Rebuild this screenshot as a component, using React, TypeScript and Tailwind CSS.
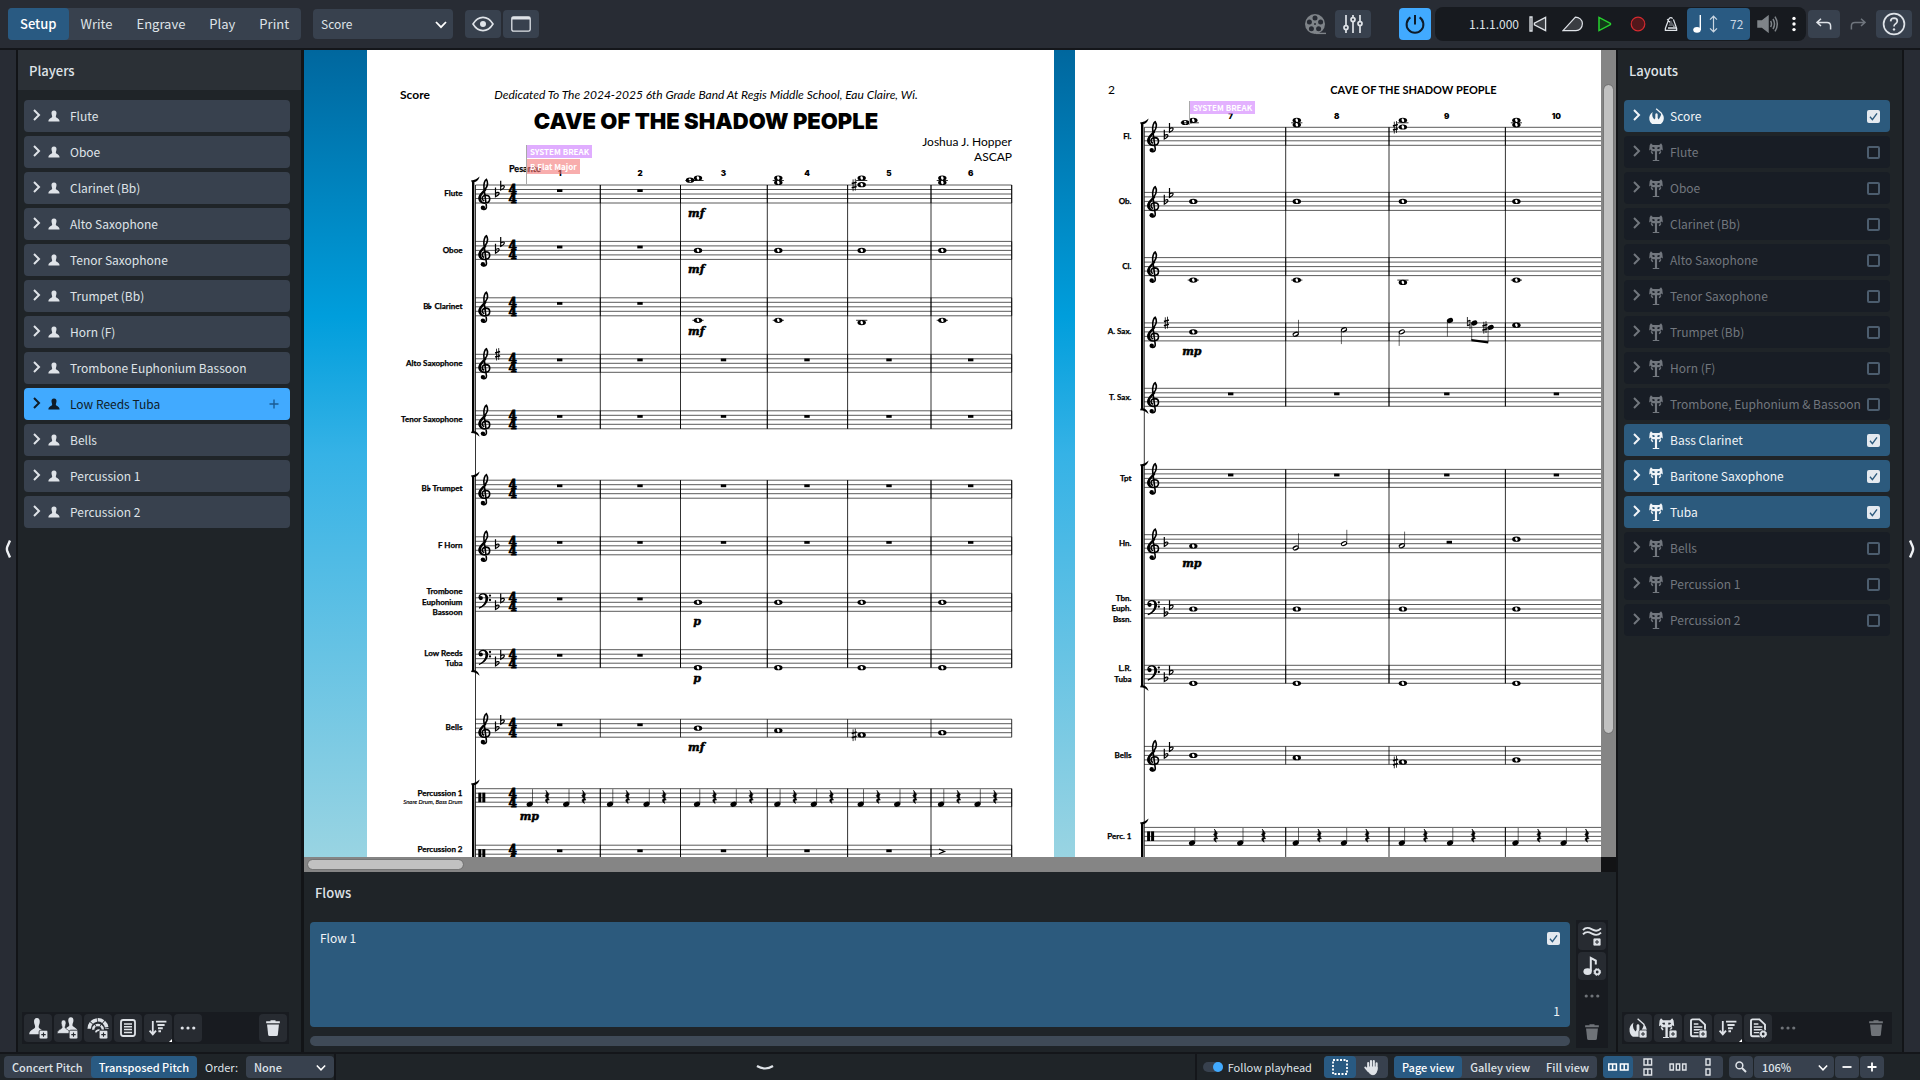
import React from "react";

type Mark = { x: number; y: number };

/* ---------- notation glyphs ---------- */

const LINE = 4.5;

function Staff({ x1, x2, y, bars }: { x1: number; x2: number; y: number; bars: number[] }) {
  return (
    <g stroke="#000" strokeWidth={0.65}>
      {[0, 1, 2, 3, 4].map((i) => (
        <line key={i} x1={x1} x2={x2} y1={y + i * LINE} y2={y + i * LINE} />
      ))}
      {bars.map((b) => (
        <line key={b} x1={b} x2={b} y1={y} y2={y + 18} strokeWidth={0.8} />
      ))}
    </g>
  );
}

function Treble({ x, y }: Mark) {
  return (
    <g transform={`translate(${x} ${y})`}>
      <path
        d="M4.7 24.3C7 25 8.6 23.6 8.2 21.2L5.8 3.5C5.2-1 6.6-4.8 8.2-5.6C9.9-3 9.3 1 7.2 4C5 7 .9 9.2 .9 13.3C.9 16.5 3.5 18.2 6.3 18.1C9.5 18 11.5 16.3 11.5 13.9C11.5 11.7 9.9 10.3 7.6 10.3C5.4 10.3 4 11.8 4 13.3C4 14.6 4.8 15.6 6 16"
        fill="none"
        stroke="#000"
        strokeWidth={1.6}
      />
      <path d="M.4 13.5C.6 9 5 7 7.6 3.2L8.2 5C6.2 8 3 9.6 2.9 13.2C2.9 15.4 4.2 17 6 17.6C2.6 17.8 .4 16 .4 13.5Z" />
      <circle cx={4.7} cy={22.8} r={2.2} />
    </g>
  );
}

function Bass({ x, y }: Mark) {
  return (
    <g transform={`translate(${x} ${y})`}>
      <path d="M.8 4.6C.8 1.8 2.8.5 5 .6C8 .8 9.2 2.8 9 5.6C8.7 10 5 13 .8 14.8" fill="none" stroke="#000" strokeWidth={1.2} />
      <path d="M5 .1C8.6.2 10.2 2.6 10 5.6C9.6 10 5 13.2 .6 15.2C4.6 12.4 7.2 9.4 7.2 5.4C7.2 3 6.8 1.2 5 .1Z" />
      <circle cx={2.6} cy={4.8} r={2.1} />
      <circle cx={11.8} cy={2.3} r={1.15} />
      <circle cx={11.8} cy={6.7} r={1.15} />
    </g>
  );
}

function PercClef({ x, y }: Mark) {
  return (
    <g>
      <rect x={x} y={y + 4} width={3} height={9.6} />
      <rect x={x + 4} y={y + 4} width={3} height={9.6} />
    </g>
  );
}

function Flat({ x, y }: Mark) {
  return (
    <path
      transform={`translate(${x} ${y})`}
      d="M.2-6.6V2.7C2.4 1.6 4 .3 3.8-1C3.5-2.1 1.4-1.8.2-.5"
      fill="none"
      stroke="#000"
      strokeWidth={1.2}
    />
  );
}

function Sharp({ x, y }: Mark) {
  return (
    <g transform={`translate(${x} ${y})`} stroke="#000">
      <path d="M-1-5.6V6.2M1.2-6.2V5.6" strokeWidth={0.8} />
      <path d="M-2.4-1.4L2.6-2.8M-2.4 2.8L2.6 1.4" strokeWidth={1.6} />
    </g>
  );
}

function Natural({ x, y }: Mark) {
  return (
    <g transform={`translate(${x} ${y})`} stroke="#000">
      <path d="M-1.2-6V3M1.4-3V6" strokeWidth={0.8} />
      <path d="M-1.4-1.6L1.6-2.6M-1.4 2.6L1.6 1.6" strokeWidth={1.4} />
    </g>
  );
}

function Whole({ x, y }: Mark) {
  return (
    <g transform={`translate(${x} ${y})`}>
      <ellipse rx={4.2} ry={2.6} />
      <ellipse rx={1.2} ry={1.8} fill="#fff" transform="rotate(-20)" />
    </g>
  );
}

function Note({ x, y, stem, hollow }: Mark & { stem: number; hollow?: boolean }) {
  const sx = stem < 0 ? x + 2.8 : x - 2.6;
  return (
    <g>
      <ellipse cx={x} cy={y} rx={3.2} ry={2.4} transform={`rotate(-24 ${x} ${y})`} />
      {hollow && <ellipse cx={x} cy={y} rx={2.4} ry={1} fill="#fff" transform={`rotate(-30 ${x} ${y})`} />}
      <line x1={sx} x2={sx} y1={y} y2={y + stem} stroke="#000" strokeWidth={0.6} />
    </g>
  );
}

function QuarterRest({ x, y }: Mark) {
  return (
    <path
      transform={`translate(${x} ${y + 8.4})`}
      d="M-1.2-6.8L1.9-2.6C.6-.9.8 1 2.2 3C.2 2.4-.4 4 .8 6.4C-2.4 4.6-2.2 1.7.2 1.6L-1.9-1.4C-.2-3-.2-4.6-1.2-6.8Z"
      stroke="#000"
      strokeWidth={0.6}
    />
  );
}

const BarRest = ({ x, y }: Mark) => <rect x={x - 2.7} y={y + 4.2} width={5.4} height={2.8} />;

const Ledger = ({ x, y }: Mark) => <line x1={x - 5.6} x2={x + 5.6} y1={y} y2={y} stroke="#000" strokeWidth={0.8} />;

function Bracket({ x, y1, y2, open }: { x: number; y1: number; y2: number; open?: boolean }) {
  return (
    <g>
      <rect x={x} y={y1} width={2.4} height={y2 - y1} />
      <path d={`M${x - 1} ${y1 - 0.6}C${x + 3} ${y1 - 0.8} ${x + 5} ${y1 - 2} ${x + 7.6} ${y1 - 4.4}C${x + 6.4} ${y1} ${x + 4} ${y1 + 1.4} ${x} ${y1 + 1.6}Z`} />
      {!open && (
        <path d={`M${x - 1} ${y2 + 0.6}C${x + 3} ${y2 + 0.8} ${x + 5} ${y2 + 2} ${x + 7.6} ${y2 + 4.4}C${x + 6.4} ${y2} ${x + 4} ${y2 - 1.4} ${x} ${y2 - 1.6}Z`} />
      )}
    </g>
  );
}

function Dynamic({ x, y, children }: Mark & { children: string }) {
  return (
    <text x={x} y={y} textAnchor="middle" fontFamily="'DejaVu Serif', serif" fontStyle="italic" fontWeight={700} fontSize={11} stroke="#000" strokeWidth={0.5}>
      {children}
    </text>
  );
}

function TimeSig({ x, y }: Mark) {
  return (
    <g fontFamily="'DejaVu Serif', serif" fontWeight={700} fontSize={12} textAnchor="middle" stroke="#000" strokeWidth={0.8}>
      <text x={x} y={y + 9}>4</text>
      <text x={x} y={y + 18}>4</text>
    </g>
  );
}

function Label({ x, y, lines, sub }: Mark & { lines: string[]; sub?: string }) {
  const start = y + (sub ? 7 : 11.2) - ((lines.length - 1) * 10.6) / 2;
  return (
    <g textAnchor="end" fontFamily="Lato, sans-serif" fontWeight={700} fontSize={8}>
      {lines.map((l, i) => (
        <text key={l} x={x} y={start + i * 10.6} stroke="#000" strokeWidth={0.25}>{l}</text>
      ))}
      {sub && <text x={x} y={start + 8.6} fontSize={6} fontWeight={400} fontStyle="italic" stroke="#000" strokeWidth={0.15}>{sub}</text>}
    </g>
  );
}

type Part = {
  y: number;
  name: string[];
  sub?: string;
  clef: "treble" | "bass" | "perc";
  key: number;
  notes?: (number | null)[];
  dyn?: { at: number; dy: number; text: string };
};

function PartHead({ p, x, labelX, time }: { p: Part; x: number; labelX: number; time?: boolean }) {
  const base = p.clef === "bass" ? 4.5 : 0;
  return (
    <g>
      <Label x={labelX} y={p.y} lines={p.name} sub={p.sub} />
      {p.clef === "treble" && <Treble x={x + 2.7} y={p.y} />}
      {p.clef === "bass" && <Bass x={x + 2.7} y={p.y} />}
      {p.clef === "perc" && <PercClef x={x + 2.8} y={p.y} />}
      {p.key < 0 && <Flat x={x + 19.8} y={p.y + 9 + base} />}
      {p.key < -1 && <Flat x={x + 25} y={p.y + 2.3 + base} />}
      {p.key > 0 && <Sharp x={x + 22} y={p.y} />}
      {time && <TimeSig x={x + 37.3} y={p.y} />}
    </g>
  );
}

/* High chord written above the flute staff: seconds in the first bar, thirds after it. */
function FluteChords({ xs, y }: { xs: number[]; y: number }) {
  return (
    <g>
      <Whole x={xs[0] - 8} y={y - 4.8} />
      <Whole x={xs[0]} y={y - 7} />
      <Ledger x={xs[0]} y={y - 4.5} />
      <Ledger x={xs[0] - 7} y={y - 4.5} />
      {[1, 3].map((i) => (
        <g key={i}>
          <Ledger x={xs[i]} y={y - 4.5} />
          <Whole x={xs[i]} y={y - 7} />
          <Whole x={xs[i]} y={y - 2.5} />
        </g>
      ))}
      <Ledger x={xs[2]} y={y - 4.5} />
      <Whole x={xs[2]} y={y - 7} />
      <Whole x={xs[2]} y={y - 0.3} />
      <Sharp x={xs[2] - 7.6} y={y} />
    </g>
  );
}

function WholeNotes({ p, xs }: { p: Part; xs: number[] }) {
  return (
    <g>
      {p.notes?.map((n, i) =>
        n === null ? null : (
          <g key={i}>
            {n > 20 && <Ledger x={xs[i]} y={p.y + 22.5} />}
            {p.name[0] === "Bells" && i === 2 && <Sharp x={xs[i] - 7.6} y={p.y + n} />}
            <Whole x={xs[i]} y={p.y + n} />
          </g>
        ),
      )}
      {p.dyn && <Dynamic x={p.dyn.at} y={p.y + p.dyn.dy}>{p.dyn.text}</Dynamic>}
    </g>
  );
}

function BarNumbers({ centres, first, y }: { centres: number[]; first: number; y: number }) {
  return (
    <g fontFamily="Inter, sans-serif" fontWeight={900} fontSize={8} textAnchor="middle">
      {centres.map((c, i) => (
        <text key={c} x={c} y={y}>{i + first}</text>
      ))}
    </g>
  );
}

function PageOneMusic() {
  const L = 475.5;
  const R = 1011.7;
  const bars = [600.3, 680.5, 767.3, 847.6, 931, R];
  const centres = [559.7, 640, 723.5, 807, 889, 970.7];
  const wx = [698, 778.3, 861.7, 942.3];
  const parts: Part[] = [
    { y: 185, name: ["Flute"], clef: "treble", key: -2, dyn: { at: 696.3, dy: 32, text: "mf" } },
    { y: 241.4, name: ["Oboe"], clef: "treble", key: -2, notes: [9, 9, 9, 9], dyn: { at: 696.3, dy: 32, text: "mf" } },
    { y: 297.8, name: ["B♭ Clarinet"], clef: "treble", key: 0, notes: [22.5, 22.5, 24.8, 22.5], dyn: { at: 696.3, dy: 37, text: "mf" } },
    { y: 354.3, name: ["Alto Saxophone"], clef: "treble", key: 1 },
    { y: 410.8, name: ["Tenor Saxophone"], clef: "treble", key: 0 },
    { y: 480.2, name: ["B♭ Trumpet"], clef: "treble", key: 0 },
    { y: 536.8, name: ["F Horn"], clef: "treble", key: -1 },
    { y: 593.3, name: ["Trombone", "Euphonium", "Bassoon"], clef: "bass", key: -2, notes: [9, 9, 9, 9], dyn: { at: 697, dy: 32, text: "p" } },
    { y: 649.7, name: ["Low Reeds", "Tuba"], clef: "bass", key: -2, notes: [18, 18, 18, 18], dyn: { at: 697, dy: 32, text: "p" } },
    { y: 719.2, name: ["Bells"], clef: "treble", key: -2, notes: [9, 11.3, 15.7, 13.5], dyn: { at: 696.3, dy: 32, text: "mf" } },
    { y: 788.7, name: ["Percussion 1"], sub: "Snare Drum, Bass Drum", clef: "perc", key: 0 },
    { y: 845.2, name: ["Percussion 2"], sub: "Crash Cymbals, Gong", clef: "perc", key: 0 },
  ];
  const perc = [529.7, 610, 697, 777.3, 860.7, 941];
  return (
    <svg viewBox="367 165 687 760" className="block h-[760px] w-full overflow-visible">
      <text x={509} y={172} fontFamily="Lato, sans-serif" fontWeight={700} fontSize={9} stroke="#000" strokeWidth={0.25}>Pesante</text>
      <BarNumbers centres={centres} first={1} y={176} />
      <line x1={L} x2={L} y1={185} y2={925} stroke="#000" strokeWidth={0.8} />
      {parts.map((p, i) => (
        <g key={p.y}>
          <Staff x1={L} x2={R} y={p.y} bars={bars} />
          <PartHead p={p} x={L} labelX={462.5} time />
          {i !== 10 && centres.slice(0, p.notes || i === 0 ? 2 : i === 11 ? 5 : 6).map((c) => <BarRest key={c} x={c} y={p.y} />)}
          <WholeNotes p={p} xs={wx} />
        </g>
      ))}
      <g stroke="#000" strokeWidth={0.8}>
        {bars.map((b) => (
          <path key={b} d={`M${b} 185V428.8M${b} 480.2V667.7M${b} 788.7V925`} />
        ))}
      </g>
      <FluteChords xs={wx} y={185} />
      <Bracket x={472} y1={181} y2={432.4} />
      <Bracket x={472} y1={476} y2={671.4} />
      <Bracket x={472} y1={784} y2={925} open />
      {perc.map((x) => (
        <g key={x}>
          <Note x={x} y={804.2} stem={-15} />
          <QuarterRest x={x + 17.4} y={788.7} />
          <Note x={x + 36.5} y={804.2} stem={-15} />
          <QuarterRest x={x + 54} y={788.7} />
        </g>
      ))}
      <Dynamic x={529.3} y={820}>mp</Dynamic>
      <path d="M939 849L944.6 851.4L939 853.8" fill="none" stroke="#000" strokeWidth={1.2} />
    </svg>
  );
}

function PageTwoMusic() {
  const L = 1144.3;
  const R = 1762;
  const bars = [1285.7, 1389, 1505.4, R];
  const centres = [1230.7, 1336.8, 1446.8, 1556.4];
  const wx = [1193.3, 1296.8, 1402.9, 1516.4];
  const parts: Part[] = [
    { y: 127.3, name: ["Fl."], clef: "treble", key: -2 },
    { y: 192.4, name: ["Ob."], clef: "treble", key: -2, notes: [9, 9, 9, 9] },
    { y: 257.6, name: ["Cl."], clef: "treble", key: 0, notes: [22.5, 22.5, 24.8, 22.5] },
    { y: 322.9, name: ["A. Sax."], clef: "treble", key: 1, notes: [9, null, null, 2.3], dyn: { at: 1191.8, dy: 32, text: "mp" } },
    { y: 388.3, name: ["T. Sax."], clef: "treble", key: 0 },
    { y: 469.4, name: ["Tpt"], clef: "treble", key: 0 },
    { y: 534.7, name: ["Hn."], clef: "treble", key: -1, notes: [11.3, null, null, 4.5], dyn: { at: 1191.8, dy: 32, text: "mp" } },
    { y: 600, name: ["Tbn.", "Euph.", "Bssn."], clef: "bass", key: -2, notes: [9, 9, 9, 9] },
    { y: 665.3, name: ["L.R.", "Tuba"], clef: "bass", key: -2, notes: [18, 18, 18, 18] },
    { y: 746.4, name: ["Bells"], clef: "treble", key: -2, notes: [9, 11.3, 15.7, 13.5] },
    { y: 827.4, name: ["Perc. 1"], clef: "perc", key: 0 },
  ];
  const perc = [1192, 1295.7, 1401.8, 1515.4];
  return (
    <svg viewBox="1075 105 687 820" className="block h-[820px] w-full overflow-visible">
      <BarNumbers centres={centres} first={7} y={119} />
      <line x1={L} x2={L} y1={127.3} y2={925} stroke="#000" strokeWidth={0.8} />
      {parts.map((p, i) => (
        <g key={p.y}>
          <Staff x1={L} x2={R} y={p.y} bars={bars} />
          <PartHead p={p} x={L} labelX={1131.5} />
          {(i === 4 || i === 5) && centres.map((c) => <BarRest key={c} x={c} y={p.y} />)}
          <WholeNotes p={p} xs={wx} />
        </g>
      ))}
      <g stroke="#000" strokeWidth={0.8}>
        {bars.map((b) => (
          <path key={b} d={`M${b} 127.3V406.3M${b} 469.4V683.3M${b} 827.4V925`} />
        ))}
      </g>
      <FluteChords xs={wx} y={127.3} />
      <Bracket x={1141} y1={123} y2={409.6} />
      <Bracket x={1141} y1={465} y2={686.6} />
      <Bracket x={1141} y1={823} y2={925} open />
      <Note x={1295.7} y={334.2} stem={-14.4} hollow />
      <Note x={1344} y={329.7} stem={14.4} hollow />
      <Note x={1401.8} y={331.9} stem={14} hollow />
      <Note x={1450} y={320.5} stem={16} />
      <Natural x={1468.6} y={323} />
      <Note x={1474.3} y={323} stem={17} />
      <Sharp x={1484.8} y={327.4} />
      <Note x={1490.7} y={327.4} stem={15} />
      <path d="M1471.4 339L1488.2 341.2V343.4L1471.4 341.2Z" />
      <Note x={1295.7} y={548} stem={-14.6} hollow />
      <Note x={1344} y={543.6} stem={-13.8} hollow />
      <Note x={1401.8} y={545.8} stem={-14.2} hollow />
      <rect x={1446.6} y={540.8} width={5.4} height={2.8} />
      {perc.map((x) => (
        <g key={x}>
          <Note x={x} y={843} stem={-15} />
          <QuarterRest x={x + 23.5} y={827.4} />
          <Note x={x + 48.2} y={843} stem={-15} />
          <QuarterRest x={x + 71.4} y={827.4} />
        </g>
      ))}
    </svg>
  );
}

/* ---------- interface icons ---------- */

function Svg({ size = 20, className = "", children }: { size?: number; className?: string; children: React.ReactNode }) {
  return (
    <svg width={size} height={size} viewBox="0 0 20 20" fill="none" stroke="currentColor" strokeWidth={1.5} className={`shrink-0 ${className}`} aria-hidden="true">
      {children}
    </svg>
  );
}

const PlusBadge = () => (
  <g stroke="none">
    <rect x={11} y={12} width={8} height={8} rx={1.5} fill="currentColor" stroke="#272b31" strokeWidth={0.8} />
    <path d="M15 14V18M13 16H17" stroke="#272b31" strokeWidth={1} />
  </g>
);

const GearBadge = () => (
  <g>
    <circle cx={15.2} cy={16} r={4.4} fill="#272b31" stroke="none" />
    <circle cx={15.2} cy={16} r={2.3} strokeWidth={1.8} />
    <circle cx={15.2} cy={16} r={3.4} strokeWidth={1} strokeDasharray="1.6 1.1" />
  </g>
);

const PAWN = "M10 2C12 2 12.8 3.6 12.6 5.6C12.5 7.4 11.6 8.6 11.6 10C11.6 12 17 12.4 17 16.6H3C3 12.4 8.4 12 8.4 10C8.4 8.6 7.5 7.4 7.4 5.6C7.2 3.6 8 2 10 2Z";

const PlayerIcon = () => (
  <Svg size={16}>
    <path d="M10 3C12.6 3 13.4 5 13.1 7C12.9 8.8 12.3 9.6 12.3 11C12.3 12.4 17 13 17 17H3C3 13 7.7 12.4 7.7 11C7.7 9.6 7.1 8.8 6.9 7C6.6 5 7.4 3 10 3Z" fill="currentColor" stroke="none" />
  </Svg>
);
const AddPlayer = () => (
  <Svg size={22}>
    <path d={PAWN} transform="translate(-1 -1)" fill="currentColor" stroke="none" />
    <PlusBadge />
  </Svg>
);
const AddGroup = () => (
  <Svg size={22}>
    <path d={PAWN} transform="translate(3.6 -1.6) scale(.9)" fill="currentColor" stroke="none" />
    <path d={PAWN} transform="translate(-2.4 1) scale(.84)" fill="currentColor" stroke="#272b31" strokeWidth={0.7} />
    <PlusBadge />
  </Svg>
);
const AddEnsemble = () => (
  <Svg size={22}>
    <path d="M2 10.6A8 8 0 0 1 18 10.6" strokeWidth={3.2} strokeDasharray="5.4 .7" />
    <path d="M5.6 11.6A4.4 4.4 0 0 1 14.4 11.6" strokeWidth={2.2} strokeDasharray="4 .7" />
    <path d="M8 14A2.2 2.2 0 0 1 12 13" strokeWidth={1.6} />
    <PlusBadge />
  </Svg>
);
const ListBox = () => (
  <Svg size={20}>
    <rect x={3} y={2} width={14} height={16} rx={2.2} strokeWidth={1.8} />
    <path d="M6 6H14M6 8.8H14M6 11.6H14M6 14.4H14" />
  </Svg>
);
const SortIcon = () => (
  <Svg size={20}>
    <path d="M4.8 3V15.4M1.6 12.6L4.8 16.4L8 12.6" strokeWidth={1.8} />
    <path d="M8 3.6H18.4M9.4 7H16.6M10 10.2H14.8M10.4 13.2H13" strokeWidth={1.9} />
  </Svg>
);
const Dots = () => (
  <Svg size={16}>
    <g fill="currentColor" stroke="none">
      <circle cx={2.8} cy={10} r={2} />
      <circle cx={10} cy={10} r={2} />
      <circle cx={17.2} cy={10} r={2} />
    </g>
  </Svg>
);
const Trash = () => (
  <Svg size={18}>
    <g fill="currentColor" stroke="none">
      <path d="M7.2 2.6V1.4H12.8V2.6H17.6V4.8H2.4V2.6Z" />
      <path d="M3.4 6H16.6L15.4 17.4Q15.2 18.8 13.8 18.8H6.2Q4.8 18.8 4.6 17.4Z" />
    </g>
  </Svg>
);
const HandsShape = () => (
  <g>
    <path d="M5.6 4.6C2.6 6.6 1 9.6 1.6 13.4C2 16 3.4 17.6 5 18.8H15C17 17.4 18.4 15.4 18.6 12.4C18.8 9.6 17.4 7.4 15.6 6C15.6 7.6 15.2 9.2 14.4 10.4L12.6 13.4L11.4 11.8V7.6C11 5.8 9 5.8 8.6 7.6V12L7.4 13.4L5.6 10.8C4.8 8.6 4.8 6.6 5.6 4.6Z" fill="currentColor" stroke="none" />
    <path d="M9.6 .8L16.4 6.8" strokeWidth={1.4} />
  </g>
);
const ScoreIcon = () => <Svg size={17}><HandsShape /></Svg>;
const StandShape = () => (
  <g>
    <path fillRule="evenodd" d="M4.4 .2L6.4 2.2H13.6L15.6 .2L17 2.6L17.6 8.2L15.8 7.2L14.8 9.2H11.2V19H13.6V20H6.4V19H8.8V9.2H5.2L4.2 7.2L2.4 8.2L3 2.6ZM5.4 5L6.6 6.6H8.6L8 4.4ZM14.6 5L13.4 6.6H11.4L12 4.4Z" fill="currentColor" stroke="none" />
    <path d="M4.6 9.4L6.4 12M15.4 9.4L13.6 12" strokeWidth={1.6} />
  </g>
);
const PartIcon = () => <Svg size={18}><StandShape /></Svg>;
const AddScoreLayout = () => (<Svg size={20}><HandsShape /><PlusBadge /></Svg>);
const AddPartLayout = () => (<Svg size={20}><g transform="translate(-1.4 0)"><StandShape /></g><PlusBadge /></Svg>);
const DocShape = () => (
  <g>
    <path d="M11.4 1.4H4.6Q3 1.4 3 3V16.6Q3 18.2 4.6 18.2H15.4Q17 18.2 17 16.6V6.6Z" strokeWidth={1.9} />
    <path d="M5.8 6H10.4M5.8 9H14.4M5.8 11.8H14.4M5.8 14.6H11" strokeWidth={1.4} />
  </g>
);
const AddDoc = () => (<Svg size={20}><DocShape /><PlusBadge /></Svg>);
const DocOptions = () => (<Svg size={20}><DocShape /><GearBadge /></Svg>);
const AddFlow = () => (
  <Svg size={20}>
    <path d="M1 4.2C4 .8 6.6 1.6 10 3.4C13.4 5.4 16 5.4 19 2.4" strokeWidth={1.9} />
    <path d="M1 8.4C4 5 6.6 5.8 10 7.6C13.4 9.6 16 9.6 19 6.6" strokeWidth={1.9} />
    <PlusBadge />
  </Svg>
);
const NoteOptions = () => (
  <Svg size={20}>
    <path d="M8.8 15V2L13.8 4.6V8.4" strokeWidth={2} />
    <ellipse cx={5.6} cy={15.6} rx={4.2} ry={3.4} fill="currentColor" stroke="none" />
    <GearBadge />
  </Svg>
);
const Chevron = ({ className = "" }: { className?: string }) => (
  <svg width={12} height={8} viewBox="0 0 12 8" fill="none" stroke="currentColor" strokeWidth={1.8} className={className} aria-hidden="true">
    <path d="M1 1L6 6.2L11 1" />
  </svg>
);

/* ---------- panels ---------- */

const players = ["Flute", "Oboe", "Clarinet (Bb)", "Alto Saxophone", "Tenor Saxophone", "Trumpet (Bb)", "Horn (F)", "Trombone Euphonium Bassoon", "Low Reeds Tuba", "Bells", "Percussion 1", "Percussion 2"];
const layouts: [string, boolean][] = [
  ["Score", true], ["Flute", false], ["Oboe", false], ["Clarinet (Bb)", false], ["Alto Saxophone", false], ["Tenor Saxophone", false], ["Trumpet (Bb)", false], ["Horn (F)", false],
  ["Trombone, Euphonium & Bassoon", false], ["Bass Clarinet", true], ["Baritone Saxophone", true], ["Tuba", true], ["Bells", false], ["Percussion 1", false], ["Percussion 2", false],
];

function Expand({ name }: { name: string }) {
  return (
    <button aria-label={`Expand ${name}`} className="flex w-3 shrink-0 justify-center pb-0.5">
      <svg width={8} height={12} viewBox="0 0 8 12" fill="none" stroke="currentColor" strokeWidth={2}><path d="M1 1L6 6L1 11" /></svg>
    </button>
  );
}

function Check({ label, checked }: { label: string; checked: boolean }) {
  return (
    <span className="relative flex h-[13px] w-[13px] shrink-0">
      <input type="checkbox" aria-label={label} defaultChecked={checked} className="peer h-full w-full appearance-none rounded-[2px] border-2 border-[#4c5d6e] checked:border-0 checked:bg-[#e4e9ef]" />
      <svg viewBox="0 0 13 13" className="pointer-events-none absolute inset-0 hidden text-[#2c5a7d] peer-checked:block" fill="none" stroke="currentColor" strokeWidth={1.4}><path d="M3 6.8L5.4 9.6L10 3.4" /></svg>
    </span>
  );
}

function Tool({ label, dim, menu, children }: { label: string; dim?: boolean; menu?: boolean; children: React.ReactNode }) {
  return (
    <button aria-label={label} className={`relative flex h-7 w-7 shrink-0 items-center justify-center rounded ${dim ? "text-[#6f7378]" : "bg-[#272b31] text-[#dfe3e8]"}`}>
      {children}
      {menu && <span className="absolute bottom-0 right-0 border-b-[3px] border-l-[3px] border-b-white border-l-transparent" />}
    </button>
  );
}

function Rail({ side }: { side: "left" | "right" }) {
  return (
    <button aria-label={`Toggle ${side} panel`} className="flex w-4 shrink-0 items-center justify-center bg-[#282c34] pb-1 text-[#eef1f4]">
      <svg width={6} height={18} viewBox="0 0 6 18" fill="none" stroke="currentColor" strokeWidth={2.4}>
        <path d={side === "left" ? "M5 0.5L2.4 6.4Q1.4 9 2.4 11.6L5 17.5" : "M1 0.5L3.6 6.4Q4.6 9 3.6 11.6L1 17.5"} />
      </svg>
    </button>
  );
}

function TopBar() {
  const icon = "flex h-7 w-9 shrink-0 items-center justify-center rounded bg-[#38414e] text-[#dfe3e8]";
  return (
    <header className="flex h-[50px] shrink-0 items-center border-b-2 border-[#14161a] bg-[#282c34] px-2 text-[13px]">
      <nav className="flex h-8 rounded bg-[#38414e]">
        {["Setup", "Write", "Engrave", "Play", "Print"].map((m, i) => (
          <button key={m} className={`rounded px-3 ${i === 0 ? "bg-[#295a82] font-medium text-white" : "text-[#dfe3e8]"}`}>{m}</button>
        ))}
      </nav>
      <div className="relative ml-3 h-[30px] w-[140px]">
        <select aria-label="Layout" className="h-full w-full appearance-none rounded bg-[#38414e] px-2 text-xs text-[#dfe3e8]"><option>Score</option></select>
        <Chevron className="pointer-events-none absolute right-1.5 top-3 text-white" />
      </div>
      <div className="ml-3 flex gap-0.5">
        <button aria-label="View options" className={icon}>
          <svg width={22} height={16} viewBox="0 0 22 16" fill="none" stroke="currentColor" strokeWidth={1.6}><path d="M1 8Q5 1.4 11 1.4T21 8Q17 14.6 11 14.6T1 8Z" /><circle cx={11} cy={8} r={3} fill="currentColor" stroke="none" /></svg>
        </button>
        <button aria-label="Window" className={icon}>
          <svg width={20} height={16} viewBox="0 0 20 16" fill="none" stroke="currentColor" strokeWidth={1.3}><rect x={0.8} y={0.8} width={18.4} height={14.4} rx={1.8} /><path d="M1 2.2H19" strokeWidth={2.6} /></svg>
        </button>
      </div>
      <div className="ml-auto flex items-center">
        <button aria-label="Video" className="mr-[7px] text-[#7f8489]">
          <svg width={24} height={22} viewBox="0 0 24 22"><circle cx={11} cy={11} r={10} fill="currentColor" /><path d="M12 20.4H22" stroke="currentColor" strokeWidth={1.4} /><g fill="#282c34"><circle cx={11} cy={5} r={2.5} /><circle cx={5.4} cy={9} r={2.5} /><circle cx={16.6} cy={9} r={2.5} /><circle cx={7.4} cy={15.8} r={2.5} /><circle cx={14.6} cy={15.8} r={2.5} /><circle cx={11} cy={11} r={1} /></g></svg>
        </button>
        <button aria-label="Mixer" className={icon}>
          <svg width={20} height={20} viewBox="0 0 20 20" fill="none" stroke="currentColor" strokeWidth={1.7}><path d="M3 1V11.4M3 16V19M10 1V3.4M10 8V19M17 1V7.4M17 12V19" /><circle cx={3} cy={13.6} r={2} /><circle cx={10} cy={5.6} r={2} /><circle cx={17} cy={9.6} r={2} /></svg>
        </button>
        <button aria-label="Activate project" className="ml-7 flex h-8 w-8 items-center justify-center rounded bg-[#41aaff] text-[#0d1b29]">
          <svg width={20} height={20} viewBox="0 0 20 20" fill="none" stroke="currentColor" strokeWidth={2}><path d="M10 1V10.6M5.4 3.4A8.4 8.4 0 1 0 14.6 3.4" /></svg>
        </button>
        <div className="ml-1 flex h-[34px] items-center rounded-lg bg-[#171a1f] pl-[34px] pr-1.5 text-xs text-[#dfe3e8]">
          <span className="w-12 whitespace-nowrap">1.1.1.000</span>
          <button aria-label="Rewind" className="ml-3 flex w-[33px]"><svg width={18} height={16} viewBox="0 0 18 16" fill="#3a3d42" stroke="currentColor" strokeWidth={1.3}><path d="M1 1H3V15H1ZM16.6 1.4V14.6L5.4 8.8V7.2Z" /></svg></button>
          <button aria-label="Move playhead" className="flex w-9"><svg width={22} height={16} viewBox="0 0 22 16" fill="#3a3d42" stroke="currentColor" strokeWidth={1.2}><path d="M1 14.6L13.4 1.2C17 1.2 20.4 3.6 20.4 7.6C20.4 12 17.4 14.6 14 14.6Z" /></svg></button>
          <button aria-label="Play" className="flex w-8"><svg width={14} height={16} viewBox="0 0 14 16" fill="#123a18" stroke="#27d12f" strokeWidth={1.5}><path d="M1 1.4V14.6L12.4 8.6V7.4Z" /></svg></button>
          <button aria-label="Record" className="flex w-[34px]"><svg width={16} height={16} viewBox="0 0 16 16" fill="#52171b" stroke="#d42a2f" strokeWidth={1.2}><circle cx={8} cy={8} r={6.8} /></svg></button>
          <button aria-label="Click" className="flex w-[23px]"><svg width={14} height={16} viewBox="0 0 14 16" fill="none" stroke="currentColor" strokeWidth={1.3}><path d="M5 2.6L1.4 12.4V14.4H12.6V12.4L9.4 3.4M5 2.6Q7 .6 8.6 2.6M10.4 10.6L3.2 3.2M4 12H12.4" /><path d="M7 4L10 10H4.4Z" fill="#5a5e64" stroke="none" /></svg></button>
          <button className="flex h-8 w-[63px] items-center gap-1.5 rounded bg-[#295a82] pl-1.5 text-[#c9d6e2]">
            <svg width={10} height={18} viewBox="0 0 10 18" fill="#fff"><ellipse cx={4} cy={14.8} rx={3.8} ry={2.9} /><path d="M6.6 0H8V15H6.6Z" /></svg>
            <svg width={9} height={18} viewBox="0 0 9 18" fill="none" stroke="currentColor" strokeWidth={1.2}><path d="M4.5 1.4V16.6M1 4.6L4.5 1.2L8 4.6M1 13.4L4.5 16.8L8 13.4" /></svg>
            <span className="ml-1.5">72</span>
          </button>
          <button aria-label="Volume" className="ml-[7px] flex w-[31px] text-[#7f8489]"><svg width={22} height={18} viewBox="0 0 22 18" fill="none" stroke="currentColor" strokeWidth={1.5}><path d="M1 6H5L11 1.4V16.6L5 12H1Z" fill="currentColor" /><path d="M13.6 6Q15.4 9 13.6 12M16 4Q19 9 16 14M18 1.6Q22.6 9 18 16.4" /></svg></button>
          <button aria-label="More transport options" className="flex w-3 justify-center"><svg width={4} height={16} viewBox="0 0 4 16" fill="#fff"><circle cx={2} cy={2.4} r={1.7} /><circle cx={2} cy={8} r={1.7} /><circle cx={2} cy={13.6} r={1.7} /></svg></button>
        </div>
        <button aria-label="Undo" className="ml-0.5 flex h-7 w-8 items-center justify-center rounded bg-[#38414e] text-[#dfe3e8]"><svg width={16} height={12} viewBox="0 0 16 12" fill="none" stroke="currentColor" strokeWidth={1.5}><path d="M5 .8L1 4.4L5 8M1.4 4.4H11Q14.6 4.4 14.6 8V11.6" /></svg></button>
        <button aria-label="Redo" className="flex h-7 w-9 items-center justify-center text-[#6f757d]"><svg width={16} height={12} viewBox="0 0 16 12" fill="none" stroke="currentColor" strokeWidth={1.5}><path d="M11 .8L15 4.4L11 8M14.6 4.4H5Q1.4 4.4 1.4 8V11.6" /></svg></button>
        <button aria-label="Help" className={icon}><svg width={24} height={24} viewBox="0 0 24 24" fill="none" stroke="currentColor" strokeWidth={1.7}><circle cx={12} cy={12} r={10.4} /><path d="M8.6 9.4Q8.8 6.2 12.1 6.2Q15.4 6.4 15.3 9.2Q15.2 10.8 13.4 11.9Q12 12.8 12 14.4" /><circle cx={12} cy={17.4} r={1.2} fill="currentColor" stroke="none" /></svg></button>
      </div>
    </header>
  );
}

function PlayersPanel() {
  return (
    <section className="flex w-[287px] shrink-0 flex-col border-x-2 border-[#121417] bg-[#1f2428]">
      <h2 className="flex h-10 shrink-0 items-center bg-[#2b3036] pl-[11px] pt-0.5 text-[13px] font-medium text-[#dfe3e8]">Players</h2>
      <ul className="mr-[11px] ml-1.5 mt-2.5 flex flex-col gap-1 text-xs">
        {players.map((p) => {
          const on = p === "Low Reeds Tuba";
          return (
            <li key={p} className={`flex h-8 items-center rounded pl-[7px] pr-2.5 ${on ? "bg-[#41aaff] text-[#0f1c28]" : "bg-[#38414e] text-[#dfe3e8]"}`}>
              <Expand name={p} />
              <span className="mx-[3px]"><PlayerIcon /></span>
              <span className="ml-[5px] whitespace-nowrap">{p}</span>
              {on && <button aria-label="Add instrument" className="ml-auto text-[#1a5b94]"><svg width={12} height={12} viewBox="0 0 12 12" stroke="currentColor" strokeWidth={1.4}><path d="M6 1.5V10.5M1.5 6H10.5" /></svg></button>}
            </li>
          );
        })}
      </ul>
      <div className="mt-auto mb-2 ml-1 mr-3 flex h-8 items-center gap-0.5 bg-[#181b20] px-0.5">
        <Tool label="Add solo player"><AddPlayer /></Tool>
        <Tool label="Add section player"><AddGroup /></Tool>
        <Tool label="Add ensemble"><AddEnsemble /></Tool>
        <Tool label="Add group"><ListBox /></Tool>
        <Tool label="Sort players" menu><SortIcon /></Tool>
        <Tool label="More"><Dots /></Tool>
        <span className="ml-auto flex"><Tool label="Delete player"><Trash /></Tool></span>
      </div>
    </section>
  );
}

function LayoutsPanel() {
  return (
    <section className="flex w-[288px] shrink-0 flex-col border-x-2 border-[#121417] bg-[#1f2428]">
      <h2 className="flex h-10 shrink-0 items-center pl-[11px] pt-0.5 text-[13px] font-medium text-[#dfe3e8]">Layouts</h2>
      <ul className="mr-3 ml-1.5 mt-2.5 flex flex-col gap-1 text-xs">
        {layouts.map(([l, on]) => (
          <li key={l} className={`flex h-8 items-center rounded pl-[7px] pr-2.5 ${on ? "bg-[#2c5a7d] text-[#f1f4f7]" : "bg-[#181d25] text-[#72777e]"}`}>
            <Expand name={l} />
            <span className="ml-1 flex w-[18px] shrink-0 justify-center">{l === "Score" ? <ScoreIcon /> : <PartIcon />}</span>
            <span className="ml-[5px] mr-auto whitespace-nowrap">{l}</span>
            <Check label={l} checked={on} />
          </li>
        ))}
      </ul>
      <div className="mt-auto mb-2 ml-1 mr-2.5 flex h-8 items-center gap-0.5 bg-[#181b20] px-0.5">
        <Tool label="Add full score layout"><AddScoreLayout /></Tool>
        <Tool label="Add part layout"><AddPartLayout /></Tool>
        <Tool label="Add custom layout"><AddDoc /></Tool>
        <Tool label="Sort layouts" menu><SortIcon /></Tool>
        <Tool label="Layout options"><DocOptions /></Tool>
        <Tool label="More" dim><Dots /></Tool>
        <span className="ml-auto flex"><Tool label="Delete layout" dim><Trash /></Tool></span>
      </div>
    </section>
  );
}

function ScoreCanvas() {
  return (
    <div className="flex min-h-0 flex-1 flex-col">
      <div className="flex min-h-0 flex-1">
        <div className="flex min-w-0 flex-1 gap-[21px] overflow-hidden bg-[linear-gradient(#00679e,#009edc_33%,#35b2e6_50%,#99d4e2)] pl-[63px] font-['Lato',sans-serif] text-black">
          <article className="relative w-[687px] shrink-0 self-start bg-white">
            <div className="h-[115px] pl-[33px] pr-[42px] pt-9">
              <div className="relative text-center text-xs leading-[18px]">
                <span className="absolute left-0 top-0 font-bold">Score</span>
                <i className="whitespace-nowrap">Dedicated To The 2024-2025 6th Grade Band At Regis Middle School, Eau Claire, Wi.</i>
              </div>
              <h1 className="mt-1 whitespace-nowrap text-center font-['Inter',sans-serif] text-[22px] font-black leading-[26px]">CAVE OF THE SHADOW PEOPLE</h1>
              <p className="text-right text-xs leading-[15px]">Joshua J. Hopper<br />ASCAP</p>
            </div>
            <PageOneMusic />
            <div className="absolute left-[159px] top-[95px] flex h-[39px] flex-col items-start gap-px border-l border-[#a9a9a9] font-['Noto_Sans_CJK_SC',sans-serif] text-[8px] font-bold leading-[13px] text-white">
              <span className="bg-[#e0adff] px-[3px]">SYSTEM BREAK</span>
              <span className="bg-[#f4767699] px-[3px] leading-[15px]">B Flat Major</span>
            </div>
          </article>
          <article className="relative w-[687px] shrink-0 self-start bg-white">
            <div className="relative h-[55px] pr-2.5 pt-8 text-center leading-4">
              <span className="absolute left-[33px] top-8 text-xs leading-4">2</span>
              <h2 className="whitespace-nowrap text-[11px] font-bold leading-4">CAVE OF THE SHADOW PEOPLE</h2>
            </div>
            <PageTwoMusic />
            <div className="absolute left-[114px] top-[51px] flex h-6 flex-col items-start border-l border-[#a9a9a9] font-['Noto_Sans_CJK_SC',sans-serif] text-[8px] font-bold leading-[13px] text-white">
              <span className="bg-[#d893ffb8] px-[3px]">SYSTEM BREAK</span>
            </div>
          </article>
        </div>
        <div className="flex w-[15px] shrink-0 flex-col items-center bg-[#858585] pt-[35px]">
          <div className="h-[84%] w-[9px] rounded-full bg-[#c1c1c1] outline outline-[#767676]" />
        </div>
      </div>
      <div className="flex h-[15px] shrink-0 bg-[#121315]">
        <div className="mr-[15px] flex flex-1 items-center bg-[#858585] pl-1">
          <div className="h-[9px] w-[12%] rounded-full bg-[#c1c1c1] outline outline-[#767676]" />
        </div>
      </div>
    </div>
  );
}

function FlowsPanel() {
  return (
    <section className="flex h-[180px] shrink-0 bg-[#1f2428]">
      <div className="flex min-w-0 flex-1 flex-col pl-1.5">
        <h2 className="flex h-10 items-center pl-[5px] pt-0.5 text-[13px] font-medium text-[#dfe3e8]">Flows</h2>
        <div className="mt-2.5 flex h-[105px] flex-col justify-between rounded bg-[#2c5a7d] px-2.5 py-1.5 text-xs leading-5 text-[#f1f4f7]">
          <div className="flex items-center justify-between"><span>Flow 1</span><Check label="Flow 1" checked /></div>
          <span className="text-right">1</span>
        </div>
        <div className="mt-[9px] h-[10px] rounded-full bg-[#3f4a57]" />
      </div>
      <div className="mx-1.5 mb-1 mt-12 flex w-8 shrink-0 flex-col items-center gap-0.5 bg-[#181b20] py-0.5">
        <Tool label="Add flow"><AddFlow /></Tool>
        <Tool label="Notation options"><NoteOptions /></Tool>
        <Tool label="More" dim><Dots /></Tool>
        <span className="mt-auto"><Tool label="Delete flow" dim><Trash /></Tool></span>
      </div>
      <div className="w-0.5" />
    </section>
  );
}

const Spread = ({ x, y }: Mark) => <path d={`M${x} ${y}H${x + 7.6}V${y + 6}H${x}ZM${x + 3.8} ${y}V${y + 6}`} />;

function StatusBar() {
  const group = "flex h-[22px] rounded bg-[#38414e] text-[#dfe3e8]";
  const cell = "flex h-[22px] items-center justify-center rounded";
  return (
    <footer className="flex h-7 shrink-0 items-center border-t-2 border-[#14161a] bg-[#1f2428] pl-1 pr-9 text-[11px] font-medium">
      <div className={group}>
        <button className={`${cell} px-2`}>Concert Pitch</button>
        <button className={`${cell} bg-[#295a82] px-2 text-white`}>Transposed Pitch</button>
      </div>
      <label htmlFor="order" className="mx-2 font-normal text-[#dfe3e8]">Order:</label>
      <div className="relative h-[22px] w-[88px]">
        <select id="order" className="h-full w-full appearance-none rounded bg-[#38414e] px-2 font-medium text-[#dfe3e8]"><option>None</option></select>
        <Chevron className="pointer-events-none absolute right-2 top-2 w-2.5 text-white" />
      </div>
      <div className="flex h-full flex-1 items-center justify-center border-x-2 border-[#14161a]">
        <button aria-label="Toggle lower panel"><svg width={18} height={5} viewBox="0 0 18 5" fill="none" stroke="#dfe3e8" strokeWidth={2.2}><path d="M1 1Q9 6 17 1" /></svg></button>
      </div>
      <label className="mr-3 ml-1.5 flex items-center gap-[5px] font-normal text-[#dfe3e8]">
        <span className="relative flex h-2.5 w-5">
          <input type="checkbox" defaultChecked className="peer h-full w-full appearance-none rounded-full bg-[#38414e]" />
          <span className="pointer-events-none absolute right-0 top-0 h-2.5 w-2.5 rounded-full bg-[#41aaff]" />
        </span>
        Follow playhead
      </label>
      <div className={group}>
        <button aria-label="Marquee tool" className={`${cell} w-8 bg-[#295a82]`}><svg width={16} height={16} viewBox="0 0 16 16" fill="none" stroke="#fff" strokeWidth={1.8} strokeDasharray="2 1.5"><rect x={1} y={1} width={14} height={14} /></svg></button>
        <button aria-label="Hand tool" className={`${cell} w-8`}><svg width={16} height={17} viewBox="0 0 16 17" fill="none" stroke="currentColor" strokeWidth={2.1} strokeLinecap="round"><path d="M4.2 4V10M7 2V9M9.8 2V9M12.6 4.4V10M1.4 8.6L4.4 12" /><path d="M4 8H13V11.6Q12 15.8 9 15.8Q6 15.8 4 12Z" fill="currentColor" strokeWidth={1} /></svg></button>
      </div>
      <div className={`${group} ml-1.5`}>
        <button className={`${cell} bg-[#295a82] px-2 text-white`}>Page view</button>
        <button className={`${cell} px-2`}>Galley view</button>
        <button className={`${cell} px-2`}>Fill view</button>
      </div>
      <div className={`${group} ml-1.5`}>
        <button aria-label="Spreads horizontally" className={`${cell} w-[30px] bg-[#295a82] text-white`}><svg width={21} height={8} viewBox="0 0 21 8" fill="none" stroke="currentColor" strokeWidth={1.5}><Spread x={0.8} y={1} /><Spread x={12.4} y={1} /></svg></button>
        <button aria-label="Spreads vertically" className={`${cell} w-[30px]`}><svg width={10} height={18} viewBox="0 0 10 18" fill="none" stroke="currentColor" strokeWidth={1.4}><Spread x={1} y={1} /><Spread x={1} y={11} /></svg></button>
        <button aria-label="Single pages horizontally" className={`${cell} w-[30px]`}><svg width={18} height={8} viewBox="0 0 18 8" fill="none" stroke="currentColor" strokeWidth={1.4}><path d="M1 1H4.4V7H1ZM7.3 1H10.7V7H7.3ZM13.6 1H17V7H13.6Z" /></svg></button>
        <button aria-label="Single pages vertically" className={`${cell} w-[30px]`}><svg width={6} height={18} viewBox="0 0 6 18" fill="none" stroke="currentColor" strokeWidth={1.4}><path d="M1 1H5V7H1ZM1 11H5V17H1Z" /></svg></button>
      </div>
      <button aria-label="Zoom tool" className={`${cell} ml-1.5 w-6 bg-[#38414e] text-[#dfe3e8]`}><svg width={12} height={12} viewBox="0 0 12 12" fill="none" stroke="currentColor" strokeWidth={1.5}><circle cx={4.4} cy={4.4} r={3.4} /><path d="M7 7L11 11" strokeWidth={2} /></svg></button>
      <div className="relative ml-px h-[22px] w-20">
        <select aria-label="Zoom" className="h-full w-full appearance-none rounded bg-[#38414e] px-2 font-medium text-[#dfe3e8]"><option>106%</option></select>
        <Chevron className="pointer-events-none absolute right-1.5 top-2 w-2.5 text-white" />
      </div>
      <button aria-label="Zoom out" className={`${cell} ml-px w-6 bg-[#38414e] text-white`}><svg width={10} height={10} viewBox="0 0 10 10" stroke="currentColor" strokeWidth={1.8}><path d="M.5 5H9.5" /></svg></button>
      <button aria-label="Zoom in" className={`${cell} ml-px w-6 bg-[#38414e] text-white`}><svg width={10} height={10} viewBox="0 0 10 10" stroke="currentColor" strokeWidth={1.8}><path d="M.5 5H9.5M5 .5V9.5" /></svg></button>
    </footer>
  );
}

export default function App() {
  return (
    <div className="flex h-screen flex-col overflow-hidden bg-[#1f2428] font-['Noto_Sans_CJK_SC',sans-serif]">
      <TopBar />
      <div className="flex min-h-0 flex-1">
        <Rail side="left" />
        <PlayersPanel />
        <main className="flex min-w-0 flex-1 flex-col border-l border-[#121417]">
          <ScoreCanvas />
          <FlowsPanel />
        </main>
        <LayoutsPanel />
        <Rail side="right" />
      </div>
      <StatusBar />
    </div>
  );
}
